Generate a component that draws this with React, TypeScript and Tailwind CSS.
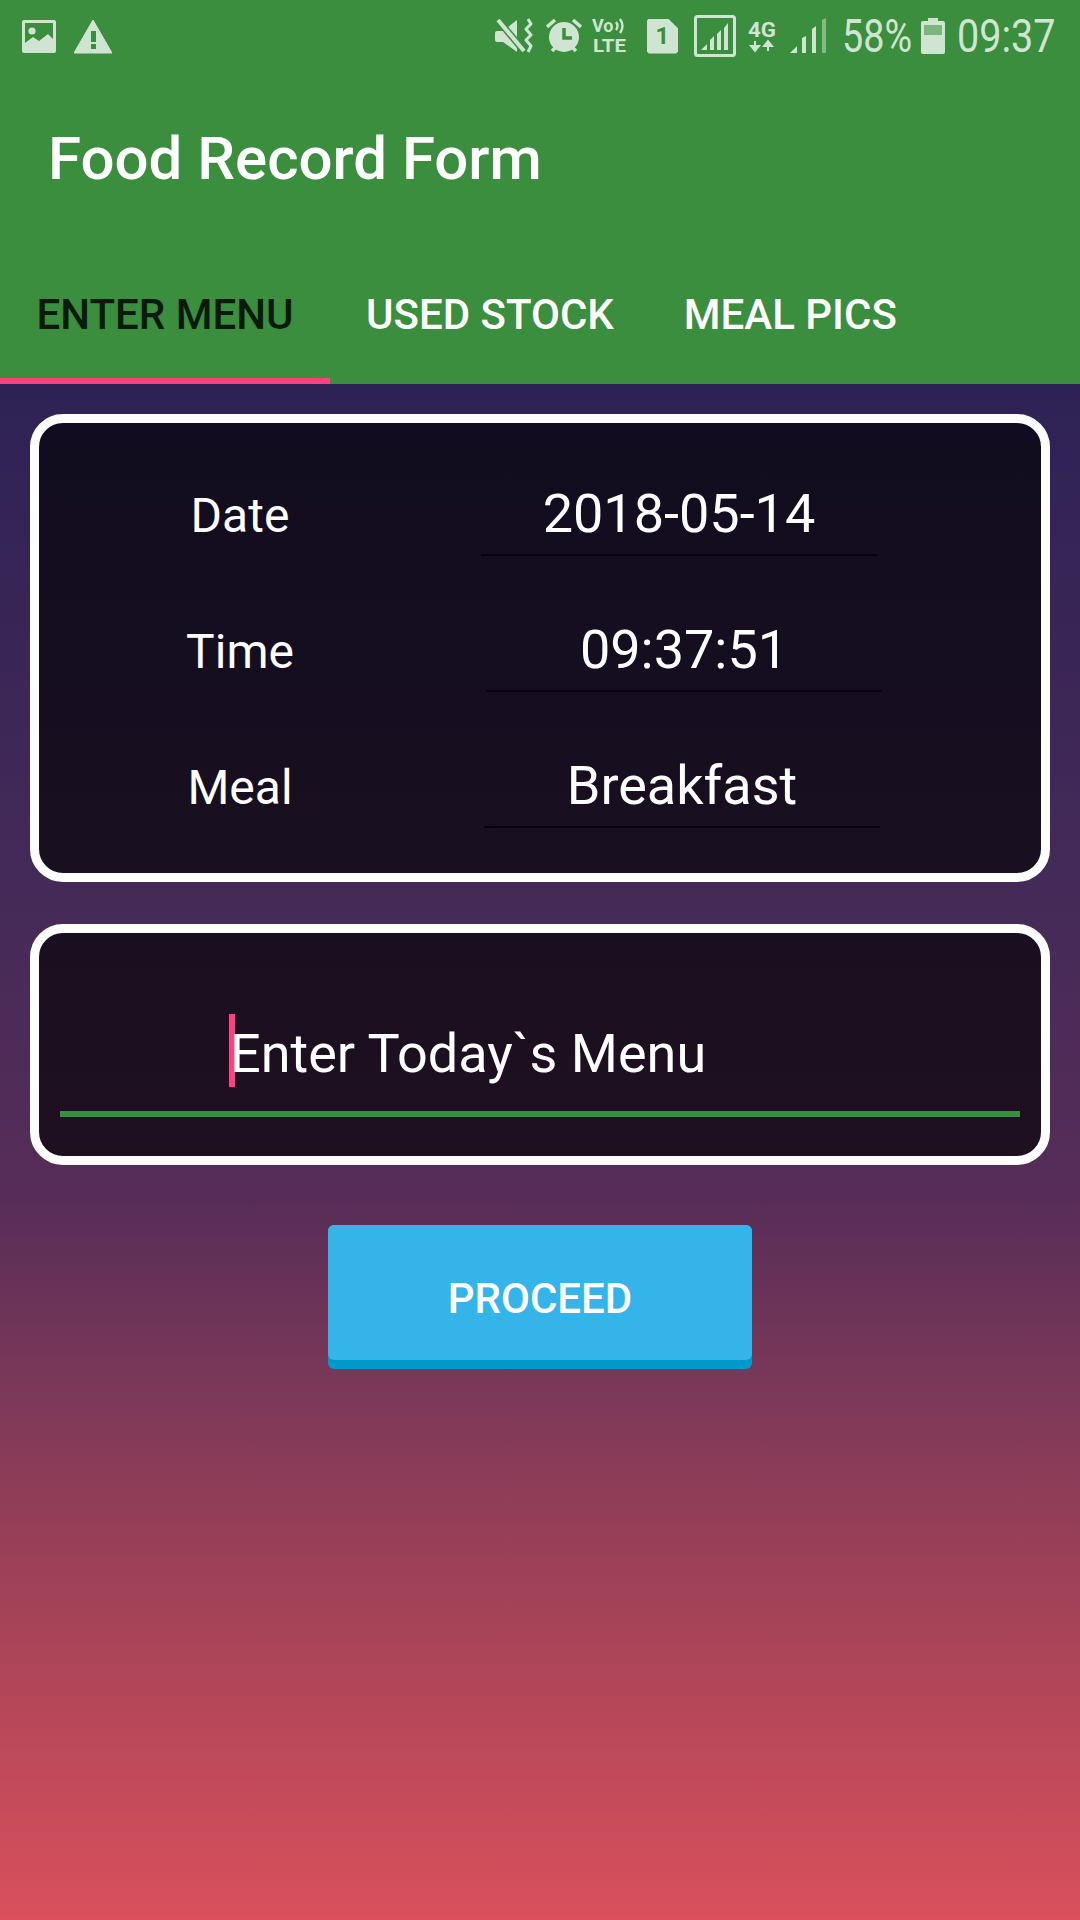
const C = "#cfe5d1";
const G = "#3a8e3d";

function StatusBar() {
  return (
    <div className="flex h-[72px] items-center bg-[#3a8e3d] pl-[22px]">
      <svg width="34" height="34" viewBox="0 0 34 34" className="mt-[1px]">
        <rect width="34" height="33" rx="2" fill={C} />
        <rect x="3" y="3" width="28" height="24" fill={G} />
        <circle cx="10" cy="11" r="3.6" fill={C} />
        <path d="M3 28V23L11 17L17 21L26 14L31 19V28Z" fill={C} />
      </svg>
      <svg width="38" height="34" viewBox="0 0 38 34" className="ml-[18px] mt-[1px]">
        <path d="M19 0L38 33H0Z" fill={C} stroke={C} strokeWidth="1" strokeLinejoin="round" />
        <rect x="17" y="11" width="5" height="11" fill={G} />
        <rect x="17" y="24" width="5" height="5" fill={G} />
      </svg>
      <div className="ml-[383px] flex items-center">
        <svg width="38" height="36" viewBox="0 0 38 36">
          <path d="M0 15Q0 13 2 13H8L22 2V34L8 24H2Q0 24 0 22Z" fill={C} />
          <path d="M3 2L29 33" stroke={G} strokeWidth="7" />
          <path d="M3 2L29 33" stroke={C} strokeWidth="4" />
          <path d="M33 1L36 6L31 11L36 17L31 22L36 28L33 34" fill="none" stroke={C} strokeWidth="3" strokeLinejoin="round" />
        </svg>
        <svg width="36" height="36" viewBox="0 0 36 36" className="ml-[13px]">
          <circle cx="18" cy="19" r="15" fill={C} />
          <path d="M18 10V20H26" fill="none" stroke={G} strokeWidth="3.5" />
          <path d="M1 9L9 2M35 9L27 2M6 33L10 29M30 33L26 29" stroke={C} strokeWidth="3.5" />
        </svg>
        <svg width="36" height="38" viewBox="0 0 36 38" className="ml-[10px] overflow-visible">
          <text x="0" y="15" fontFamily="Roboto" fontWeight="700" fontSize="18" fill={C}>Vo</text>
          <path d="M24 5Q27 9 24 13M28 2Q33 9 28 16" fill="none" stroke={C} strokeWidth="2.4" />
          <text x="1" y="35" fontFamily="Roboto" fontWeight="700" fontSize="18" fill={C} textLength="33" lengthAdjust="spacingAndGlyphs">LTE</text>
        </svg>
        <div className="relative ml-[19px] flex h-[35px] w-[31px] items-center justify-center bg-[#cfe5d1] [clip-path:polygon(6%_0,68%_0,100%_28%,100%_94%,94%_100%,6%_100%,0_94%,0_6%)]">
          <span className="font-['Roboto',sans-serif] text-[24px] leading-none font-bold text-[#3a8e3d]">1</span>
        </div>
        <svg width="42" height="42" viewBox="0 0 42 42" className="ml-[16px]">
          <rect x="1.5" y="1.5" width="39" height="39" rx="2" fill="none" stroke={C} strokeWidth="3" />
          <path d="M7 35L13 29V35ZM16 35V25L20 21V35ZM23 35V19L27 15V35ZM30 35V13L34 8V35Z" fill={C} />
        </svg>
        <svg width="30" height="36" viewBox="0 0 30 36" className="ml-[12px] overflow-visible">
          <text x="0" y="19" fontFamily="Roboto" fontWeight="700" fontSize="21" fill={C} textLength="28" lengthAdjust="spacingAndGlyphs">4G</text>
          <path d="M7 23V29M3 28L7 33L11 28Z M20 33V27M16 28L20 23L24 28Z" fill={C} stroke={C} strokeWidth="2" />
        </svg>
        <svg width="36" height="36" viewBox="0 0 36 36" className="ml-[12px]">
          <path d="M0 35L7 28V35ZM12 35V20L16 18V35ZM22 35V11L26 8V35Z" fill={C} />
          <path d="M32 35V2L36 0V35Z" fill={C} opacity="0.5" />
        </svg>
        <div className="ml-[16px] flex h-[46px] w-[70px] items-center">
          <span className="origin-left scale-x-[0.82] font-['Roboto',sans-serif] text-[46px] leading-none font-normal whitespace-nowrap text-[#cfe5d1]">58%</span>
        </div>
        <svg width="24" height="36" viewBox="0 0 24 36" className="ml-[9px]">
          <path d="M7 0H17V3H22Q24 3 24 5V34Q24 36 22 36H2Q0 36 0 34V5Q0 3 2 3H7Z" fill={C} />
          <rect x="3" y="7" width="18" height="10" fill={G} opacity="0.55" />
        </svg>
        <div className="ml-[12px] flex h-[46px] w-[100px] items-center">
          <span className="origin-left scale-x-[0.86] font-['Roboto',sans-serif] text-[46px] leading-none font-normal whitespace-nowrap text-[#cfe5d1]">09:37</span>
        </div>
      </div>
    </div>
  );
}

function Row({ label, value, ml }: { label: string; value: string; ml: string }) {
  return (
    <div className="flex h-[76px] items-center">
      <div className="w-[402px] pb-[4px] text-center text-[48px] text-white">{label}</div>
      <div className={`flex h-[76px] w-[396px] items-center justify-center border-b-2 border-[#05030a] pb-[7px] text-[54px] text-white ${ml}`}>
        {value}
      </div>
    </div>
  );
}

export default function App() {
  return (
    <div className="flex h-[1920px] w-[1080px] flex-col overflow-hidden bg-[linear-gradient(180deg,#2e2255_20%,#452a58_47%,#572d58_62.5%,#7a3858_72%,#a84458_85%,#da505c_100%)] font-['Roboto',sans-serif]">
      <div className="bg-[#3a8e3d]">
        <StatusBar />
        <div className="flex h-[180px] items-center pl-[48px] pb-[6px] text-[60px] font-medium text-white">Food Record Form</div>
        <div className="flex h-[132px] text-[42px] font-medium">
          <div className="flex w-[330px] items-center justify-center border-b-[6px] border-[#ff4081] pb-[2px] text-[#0b1a0c]">ENTER MENU</div>
          <div className="flex items-center border-b-[6px] border-transparent px-[36px] pb-[2px] text-white">USED STOCK</div>
          <div className="-ml-[2px] flex items-center border-b-[6px] border-transparent px-[36px] pb-[2px] text-white">MEAL PICS</div>
        </div>
      </div>
      <div className="mx-[30px] mt-[30px] flex h-[468px] flex-col gap-[60px] rounded-[33px] border-[9px] border-white bg-black/[0.63] pt-[57px]">
        <Row label="Date" value="2018-05-14" ml="ml-[40px]" />
        <Row label="Time" value="09:37:51" ml="ml-[45px]" />
        <Row label="Meal" value="Breakfast" ml="ml-[43px]" />
      </div>
      <div className="mx-[30px] mt-[42px] flex h-[241px] flex-col rounded-[33px] border-[9px] border-white bg-black/[0.63] px-[21px]">
        <div className="mt-[81px] flex h-[73px] items-center pl-[169px]">
          <div className="h-[73px] w-[6px] bg-[#ff4081]" />
          <span className="-ml-[5px] pt-[6px] text-[54px] text-white">Enter Today`s Menu</span>
        </div>
        <div className="mt-[24px] h-[6px] bg-[#3a8e3d]" />
      </div>
      <button className="mx-auto mt-[60px] h-[144px] w-[424px] rounded-[6px] bg-[#0099cc] pb-[9px]">
        <div className="flex h-full items-center justify-center rounded-[6px] bg-[#34b4e8] pt-[12px] text-[42px] font-medium text-white">PROCEED</div>
      </button>
    </div>
  );
}
